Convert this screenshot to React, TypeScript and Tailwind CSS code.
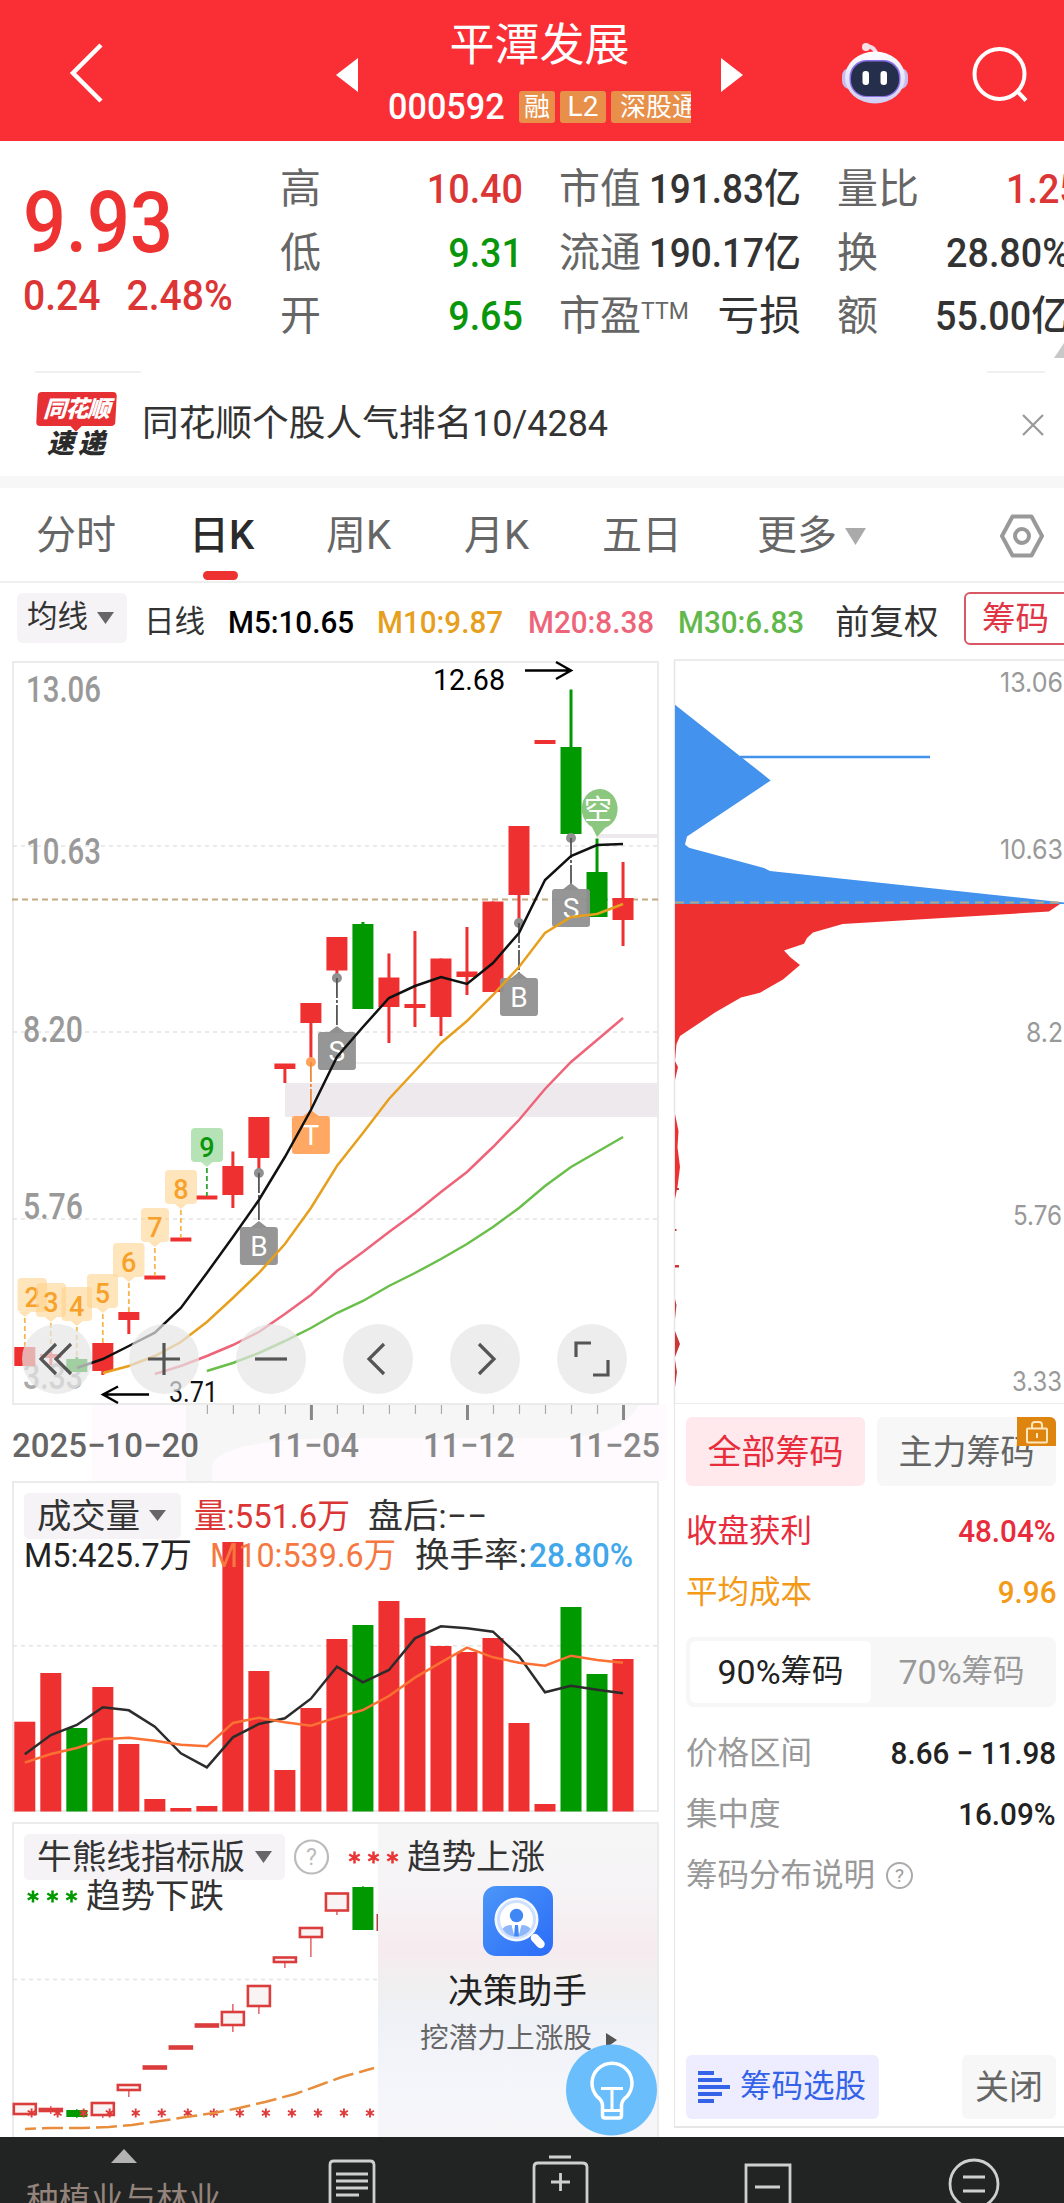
import React from "react";

const CJK = "font-['Roboto','Noto_Sans_CJK_SC',sans-serif]";
const RED = "#ef3030";
const GREEN = "#009900";
const FONT = "Roboto, 'Noto Sans CJK SC', sans-serif";

const cx = (i: number) => 24.8 + i * 26.01;

// [bodyTop, bodyBottom, high, low, up]
type Candle = [number, number, number, number, boolean];

const candles: Candle[] = [
  [1347, 1366, 1347, 1366, true],
  [1354, 1358, 1349, 1365, true],
  [1359, 1372, 1357, 1372, false],
  [1343, 1371, 1343, 1375, true],
  [1312, 1320, 1312, 1334, true],
  [1275.5, 1279.5, 1277, 1278, true],
  [1237.5, 1241.5, 1239, 1240, true],
  [1195.5, 1199.5, 1197, 1198, true],
  [1166, 1195, 1151.5, 1208, true],
  [1117, 1158, 1117, 1173, true],
  [1063.5, 1069, 1064, 1083, true],
  [1003, 1023, 1003, 1062, true],
  [937, 970.5, 937, 977, true],
  [924, 1009, 922, 1009, false],
  [977.5, 1007, 953.5, 1043, true],
  [1004, 1008, 931, 1027, true],
  [958.5, 1017, 958.5, 1036, true],
  [971.5, 977, 927, 995, true],
  [901.5, 992, 901.5, 992, true],
  [826, 895, 826, 923, true],
  [740, 744, 741, 743, true],
  [747, 834, 689.5, 834, false],
  [872, 917, 838.5, 917, false],
  [898, 920, 862, 946, true],
];

const ma5 = [1368, 1359, 1346, 1332.7, 1308, 1273, 1237, 1200, 1157, 1110, 1057, 1027, 998, 986, 977, 984, 963, 933, 880, 856, 845, 844];
const ma10 = [1373, 1366, 1356, 1342, 1322, 1298, 1273, 1244, 1208, 1166, 1133, 1099, 1071, 1043, 1021, 995, 967, 933, 917, 914, 904];
const ma20 = [1374, 1366, 1356, 1345, 1332, 1314, 1295, 1271, 1252, 1232, 1213, 1192, 1172, 1147, 1120, 1089, 1062, 1040, 1018];
const ma30 = [1371, 1363, 1353, 1341, 1328, 1313, 1301, 1286, 1273, 1259, 1244, 1227, 1208, 1186, 1167, 1152, 1137];

const line = (ys: number[], start: number) => ys.map((y, i) => `${cx(i + start)},${y}`).join(" ");

function Label(p: { x: number; y: number; w: number; size: number; color: string; children: string; weight?: number; family?: string }) {
  return (
    <text
      x={p.x}
      y={p.y}
      textLength={p.w}
      lengthAdjust="spacingAndGlyphs"
      fontSize={p.size}
      fill={p.color}
      fontWeight={p.weight ?? 400}
      fontFamily={p.family ?? FONT}
      style={{ whiteSpace: "pre" }}
    >
      {p.children}
    </text>
  );
}

function Signal({ i, dot, top, ch, color = "#8f908f", dash = "#555" }: { i: number; dot: number; top: number; ch: string; color?: string; dash?: string }) {
  const x = cx(i);
  return (
    <g>
      <circle cx={x} cy={dot} r={5} fill={color} />
      <line x1={x} x2={x} y1={dot} y2={top - 4} stroke={dash} strokeWidth={1.8} strokeDasharray="20 2 3 2" />
      <path d={`M${x - 9} ${top + 1}L${x} ${top - 6}L${x + 9} ${top + 1}Z`} fill={color} />
      <rect x={x - 19} y={top} width={38} height={38} rx={3} fill={color} fillOpacity={0.95} />
      <text x={x} y={top + 29} textAnchor="middle" fontSize={28} fill="#fff" fontFamily={FONT}>
        {ch}
      </text>
    </g>
  );
}

function Count({ n, i, left, w, top, end }: { n: number; i: number; left: number; w: number; top: number; end: number }) {
  const g = n === 9;
  const x = cx(i);
  const mid = left + w / 2;
  const fill = g ? "#8fd48f" : "#ffcf85";
  return (
    <g>
      <rect x={left} y={top} width={w} height={34} rx={4} fill={fill} fillOpacity={g ? 0.65 : 0.55} />
      <path d={`M${x - 6} ${top + 34}h12l-6 5z`} fill={fill} fillOpacity={0.6} />
      <line x1={x} x2={x} y1={top + 40} y2={end} stroke={g ? "#31a431" : "#f7b64d"} strokeWidth={1.8} strokeDasharray="5 3" />
      <text x={mid} y={top + 29} textAnchor="middle" fontSize={27} fontWeight={500} fill={g ? "#0a960a" : "#f7a12a"} fontFamily={FONT}>
        {n}
      </text>
    </g>
  );
}

function KChart() {
  return (
    <svg className="block" width={670} height={815} viewBox="0 650 670 815">
      <rect x={92} y={1404} width={574} height={61} fill="#fefafe" />
      <path d="M186 1404H640Q620 1437 560 1438H340Q220 1440 212 1465H186Z" fill="#f7f6f7" />
      <rect x={13} y={662} width={645} height={742} fill="#fff" stroke="#ebebeb" strokeWidth={2} />
      {[846, 1032, 1219].map((y) => (
        <line key={y} x1={13} x2={658} y1={y} y2={y} stroke="#e4e4e4" strokeWidth={1.5} strokeDasharray="4 4" />
      ))}
      <line x1={12} x2={658} y1={899.5} y2={899.5} stroke="#c3aa80" strokeWidth={1.8} strokeDasharray="6 4" />
      <rect x={597} y={834} width={61} height={4} fill="#eee9ec" />
      <line x1={337} x2={658} y1={1063} y2={1063} stroke="#eeeaed" strokeWidth={1.5} />
      <rect x={285} y={1083} width={373} height={34} fill="#eee9ed" />
      <Label x={26} y={702} w={75} size={36} color="#999" weight={500}>13.06</Label>
      <Label x={26} y={864} w={75} size={36} color="#999" weight={500}>10.63</Label>
      <Label x={23} y={1042} w={60} size={36} color="#999" weight={500}>8.20</Label>
      <Label x={23} y={1219} w={60} size={36} color="#999" weight={500}>5.76</Label>
      <Label x={23} y={1389} w={60} size={36} color="#aaa" weight={500}>3.33</Label>

      {candles.map(([t, b, h, l, up], i) => (
        <g key={i} fill={up ? RED : GREEN}>
          <rect x={cx(i) - 1.5} y={h} width={3} height={l - h} />
          <rect x={cx(i) - 10.5} y={t} width={21} height={b - t} />
        </g>
      ))}

      <Signal i={9} dot={1173} top={1227} ch="B" />
      <Signal i={11} dot={1062} top={1116} ch="T" color="#ffa35c" dash="#ee8a3c" />
      <Signal i={12} dot={978} top={1032} ch="S" />
      <Signal i={19} dot={923} top={978} ch="B" />
      <Signal i={21} dot={838} top={889} ch="S" />
      <Count n={2} i={0} left={17.5} w={29.5} top={1278} end={1347} />
      <Count n={3} i={1} left={36} w={30} top={1283} end={1354} />
      <Count n={4} i={2} left={61.5} w={30.5} top={1287} end={1358} />
      <Count n={5} i={3} left={87} w={31} top={1274} end={1343} />
      <Count n={6} i={4} left={113} w={31.5} top={1243} end={1312} />
      <Count n={7} i={5} left={141} w={28} top={1208} end={1276} />
      <Count n={8} i={6} left={165} w={32} top={1170} end={1238} />
      <Count n={9} i={7} left={191} w={32} top={1128} end={1196} />

      <path d="M597 837L592 827A18 20 0 1 1 605 828Z" fill="#82c274" fillOpacity={0.92} />
      <Label x={584} y={820} w={28} size={28} color="#fff">空</Label>

      <g fill="none" strokeWidth={2.5}>
        <polyline points={line(ma30, 7)} stroke="#6abf4b" />
        <polyline points={line(ma20, 5)} stroke="#ee6479" />
        <polyline points={line(ma10, 3)} stroke="#e6a01e" />
        <polyline points={line(ma5, 2)} stroke="#111" />
      </g>

      <Label x={433} y={690} w={72} size={30} color="#000">12.68</Label>
      <path d="M525 670.5H570M556 662L571 670.5L556 679" fill="none" stroke="#000" strokeWidth={2.4} />
      <Label x={169} y={1402} w={49} size={30} color="#111">3.71</Label>
      <path d="M149 1394.5H104M118 1386.5L103 1394.5L118 1403" fill="none" stroke="#000" strokeWidth={2.4} />

      {Array.from({ length: 17 }, (_, k) => {
        const i = k + 7;
        const major = i === 11 || i === 17 || i === 23;
        return <line key={i} x1={cx(i) + 0.5} x2={cx(i) + 0.5} y1={1405} y2={major ? 1420 : 1414} stroke={major ? "#888" : "#aaa"} strokeWidth={major ? 3 : 1.2} />;
      })}
      <Label x={12} y={1457} w={187} size={34} color="#666" weight={500}>2025−10−20</Label>
      <Label x={267} y={1457} w={92} size={34} color="#888" weight={500}>11−04</Label>
      <Label x={423} y={1457} w={92} size={34} color="#888" weight={500}>11−12</Label>
      <Label x={568} y={1457} w={92} size={34} color="#888" weight={500}>11−25</Label>
    </svg>
  );
}

const volumes = [1721.7, 1673, 1728, 1687, 1744, 1799, 1808, 1806, 1542, 1671, 1770, 1708, 1639, 1625, 1601, 1618, 1646, 1652, 1638, 1723, 1804, 1607, 1674, 1659];
const volDown = [2, 13, 21, 22];
const v5 = [853, 795, 765, 712, 721, 770, 850, 892, 802, 762, 745, 686, 590, 637, 600, 505, 469, 475, 485, 558, 667, 647, 659, 670].map((v) => 1470 + v / 3);
const v10 = [878, 852, 834, 808, 803, 812, 824, 829, 759, 743, 757, 767, 742, 720, 678, 623, 577, 533, 562, 578, 587, 557, 570, 578].map((v) => 1470 + v / 3);

function VolumeChart() {
  return (
    <svg className="block" width={670} height={349} viewBox="0 1465 670 349">
      <rect x={92} y={1465} width={574} height={16} fill="#fefafe" />
      <rect x={186} y={1465} width={26} height={16} fill="#f7f6f7" />
      <rect x={13} y={1482} width={645} height={329} fill="#fff" stroke="#ebebeb" strokeWidth={2} />
      <line x1={13} x2={658} y1={1645.7} y2={1645.7} stroke="#e4e4e4" strokeWidth={1.5} strokeDasharray="4 4" />
      {volumes.map((t, i) => (
        <rect key={i} x={cx(i) - 10.5} y={t} width={21} height={1811.5 - t} fill={volDown.includes(i) ? GREEN : RED} />
      ))}
      <g fill="none" strokeWidth={2.5}>
        <polyline points={line(v5, 0)} stroke="#2c2c2c" />
        <polyline points={line(v10, 0)} stroke="#fb7033" />
      </g>
      <rect x={24} y={1493} width={157} height={46} rx={5} fill="#f6f3f7" />
      <Label x={37} y={1528} w={103} size={34} color="#333">成交量</Label>
      <path d="M149 1510h17l-8.500 11z" fill="#666" />
      <Label x={194} y={1528} w={156} size={34} color="#dc3535">量:551.6万</Label>
      <Label x={368} y={1528} w={119} size={34} color="#333">盘后:−−</Label>
      <Label x={24} y={1567} w={168} size={34} color="#222">M5:425.7万</Label>
      <Label x={210} y={1567} w={186} size={34} color="#f67840">M10:539.6万</Label>
      <Label x={415} y={1567} w={112} size={34} color="#333">换手率:</Label>
      <Label x={529} y={1567} w={104} size={34} color="#3fa7ea" weight={500}>28.80%</Label>
    </svg>
  );
}

const hollow: [number, number, number, number][] = [
  [2104, 2114, 2104, 2114],
  [2109, 2111, 2106, 2114],
  [2110, 2117, 2109, 2118],
  [2103, 2115, 2103, 2118],
  [2085, 2090, 2085, 2097],
  [2066.5, 2068.5, 2067, 2068],
  [2046.5, 2048.5, 2047, 2048],
  [2024.5, 2026.5, 2025, 2026],
  [2012, 2025, 2004, 2032],
  [1986, 2006, 1986, 2014],
  [1957.5, 1962, 1957, 1968],
  [1928, 1937, 1928, 1957],
  [1893.5, 1910.5, 1893, 1915],
  [1887, 1930, 1886, 1930],
];

function Star({ x, y, r, color }: { x: number; y: number; r: number; color: string }) {
  const dx = r * 0.87;
  const dy = r * 0.5;
  return (
    <path d={`M${x} ${y - r}V${y + r}M${x - dx} ${y - dy}L${x + dx} ${y + dy}M${x + dx} ${y - dy}L${x - dx} ${y + dy}`} stroke={color} strokeWidth={r * 0.42} />
  );
}

function Help({ x, y, r }: { x: number; y: number; r: number }) {
  return (
    <g>
      <circle cx={x} cy={y} r={r} fill="none" stroke="#bbb" strokeWidth={2.2} />
      <text x={x} y={y + r * 0.5} textAnchor="middle" fontSize={r * 1.4} fill="#bbb" fontFamily={FONT}>?</text>
    </g>
  );
}

function TrendChart() {
  return (
    <svg className="block" width={670} height={323} viewBox="0 1814 670 323">
      <defs>
        <linearGradient id="promo" x1="0" y1="0" x2="0" y2="1">
          <stop offset="0" stopColor="#f6f6f6" />
          <stop offset="0.2" stopColor="#f6f4f6" />
          <stop offset="0.4" stopColor="#f6ebef" />
          <stop offset="0.5" stopColor="#f1efef" />
          <stop offset="0.62" stopColor="#eef1f6" />
          <stop offset="0.8" stopColor="#f4f5fb" />
          <stop offset="1" stopColor="#f6f6f8" />
        </linearGradient>
        <linearGradient id="app" x1="0" y1="0" x2="1" y2="1">
          <stop offset="0" stopColor="#4b96f8" />
          <stop offset="1" stopColor="#2b6cf8" />
        </linearGradient>
      </defs>
      <path d="M13 2137V1823H658V2137" fill="#fff" stroke="#ebebeb" strokeWidth={2} />
      <rect x={378} y={1824} width={279} height={313} fill="url(#promo)" />
      <line x1={13} x2={377} y1={1979.5} y2={1979.5} stroke="#e4e4e4" strokeWidth={1.5} strokeDasharray="4 4" />
      {hollow.map(([t, b, h, l], i) => {
        const down = i === 2 || i === 13;
        const c = down ? GREEN : "#db3c3c";
        return (
          <g key={i}>
            <line x1={cx(i)} x2={cx(i)} y1={h} y2={t} stroke={c} strokeWidth={1.2} />
            <line x1={cx(i)} x2={cx(i)} y1={b} y2={l} stroke={c} strokeWidth={1.2} />
            {down ? (
              <rect x={cx(i) - 10.5} y={t} width={21} height={b - t} fill={c} />
            ) : (
              <rect x={cx(i) - 11} y={t} width={22} height={b - t} fill="#faf3f3" stroke={c} strokeWidth={2.6} />
            )}
          </g>
        );
      })}
      <rect x={376.5} y={1914} width={1.5} height={17} fill="#b04040" />
      {Array.from({ length: 14 }, (_, i) => (
        <Star key={i} x={31.6 + i * 26.03} y={2113} r={4.5} color="#e03a3a" />
      ))}
      <polyline
        points="25,2129 51,2128 83,2128 109,2127 132,2125 160,2121 186,2117 214,2113 239,2108 265,2102 295,2094 320,2085 342,2077 374,2068"
        fill="none"
        stroke="#e88d3c"
        strokeWidth={2.5}
        strokeDasharray="21 6"
        strokeDashoffset={10}
      />
      <rect x={24} y={1834} width={261} height={46} rx={5} fill="#f6f3f7" />
      <Label x={37} y={1869} w={208} size={34} color="#333">牛熊线指标版</Label>
      <path d="M255 1851h17l-8.500 12z" fill="#666" />
      <Help x={311.5} y={1857} r={16.5} />
      {[354.5, 373.5, 392.5].map((x) => <Star key={x} x={x} y={1857.5} r={6} color="#e93535" />)}
      <Label x={407} y={1869} w={138} size={34} color="#333">趋势上涨</Label>
      {[33, 52.5, 71.5].map((x) => <Star key={x} x={x} y={1896.5} r={6} color={GREEN} />)}
      <Label x={86} y={1908} w={138} size={34} color="#333">趋势下跌</Label>

      <rect x={483} y={1886} width={70} height={70} rx={13} fill="url(#app)" />
      <circle cx={516.5} cy={1919.5} r={22} fill="#f5f9ff" />
      <circle cx={516.5} cy={1919.5} r={18} fill="#fff" stroke="#cfe0ff" strokeWidth={3} />
      <circle cx={516.5} cy={1915.5} r={6.7} fill="#3f87f5" />
      <path d="M502.500 1929Q505 1925 511.500 1925L514.500 1936.500Q507 1936 502.500 1929ZM530.500 1929Q528 1925 521.500 1925L518.500 1936.500Q526 1936 530.500 1929Z" fill="#8db7fa" />
      <path d="M515 1925h3l1 11.500h-5z" fill="#3f87f5" />
      <path d="M535 1938l5.500 6" stroke="#fff" strokeWidth={8.5} strokeLinecap="round" />
      <Label x={448} y={2003} w={139} size={34.5} color="#222">决策助手</Label>
      <Label x={420} y={2048} w={172} size={28} color="#666">挖潜力上涨股</Label>
      <path d="M606 2033l11 7l-11 8z" fill="#555" />
      <circle cx={611.5} cy={2090} r={45.5} fill="#6bbefc" />
      <g fill="none" stroke="#fff" strokeWidth={3.5}>
        <path d="M602.500 2105Q602 2100 597 2096.500A20 20 0 1 1 627 2096.500Q622 2100 621.500 2105V2115.500Q621.500 2118 619 2118H605Q602.500 2118 602.500 2115.500Z" />
        <path d="M602 2110.500H622M601 2088.500H623M612 2088.500V2110" strokeWidth={3} />
      </g>
    </svg>
  );
}

function ChipChart() {
  const axis: [string, number, number, number][] = [
    ["13.06", 1000, 692, 63],
    ["10.63", 1000, 859, 63],
    ["8.2", 1026, 1042, 37],
    ["5.76", 1013, 1225, 49],
    ["3.33", 1012, 1391, 50],
  ];
  return (
    <svg className="block" width={394} height={754} viewBox="670 650 394 754">
      <path d="M1064 660H674.500V1404H1064" fill="none" stroke="#e6e6e6" strokeWidth={1.5} />
      <path d="M675 704.800L770.700 780.400L687 836.600L685 844.400L689 847.800L764 868L770 871L1064 902.500V904H675Z" fill="#4292ee" />
      <path d="M740 757H930" stroke="#4292ee" strokeWidth={2.5} />
      <path
        d="M675 904H1060L1049 911.500L842.700 924L813 932.600L807 938L804 943.700L784 950.500L790 957L800 965L783 979.600L760 992.700L741 997.500L715 1012.600L680 1036L676.500 1044L675 1061L678 1067L675 1080V1114L678.500 1131L677.500 1147L680 1167L677.500 1187L675 1199Z"
        fill={RED}
      />
      <path d="M675 1265h4v2.500h-4zM675 1188h4v2h-4zM675 1229h1.500v2h-1.500zM675 1299l1.500 6l-1.500 14zM675 1331l5 13l-5 13zM675 1360l2 12l-2 15z" fill="#cf3535" />
      <path d="M675 902.500H1062" stroke="#b8a882" strokeWidth={2} strokeDasharray="9 6" />
      {axis.map(([t, x, y, w]) => (
        <Label key={t} x={x} y={y} w={w} size={27} color="#999" family="Inter, sans-serif">{t}</Label>
      ))}
    </svg>
  );
}

function QuoteRow({ label, value, tone, l2, v2, l3, v3, sup }: { label: string; value: string; tone: string; l2: string; v2: React.ReactNode; l3: string; v3: React.ReactNode; sup?: string }) {
  return (
    <div className="flex h-[63.5px] items-center whitespace-nowrap text-[41px] leading-none text-[#666]">
      <span className="w-[80px] shrink-0">{label}</span>
      <span className={`w-[163px] shrink-0 origin-right scale-x-[.92] text-right font-medium ${tone}`}>{value}</span>
      <span className="ml-[36px] flex w-[136px] shrink-0 items-start">
        {l2}
        {sup && <sup className="top-0 mt-1 text-[23px] leading-none">{sup}</sup>}
      </span>
      <span className="w-[106px] shrink-0">
        <span className="float-right origin-right scale-x-[.9] font-medium text-[#333]">{v2}</span>
      </span>
      <span className="ml-[36px] w-[84px] shrink-0">{l3}</span>
      <span className="ml-auto shrink-0 font-medium text-[#333]">{v3}</span>
    </div>
  );
}

function ToolButton({ children }: { children: React.ReactNode }) {
  return (
    <button className="flex size-[70px] items-center justify-center rounded-full bg-[#e5e5e5]/70">
      <svg width={40} height={40} viewBox="0 0 40 40" fill="none" stroke="#555" strokeWidth={3.2}>{children}</svg>
    </button>
  );
}

export default function App() {
  return (
    <div className={`flex h-[2203px] w-[1064px] flex-col overflow-hidden bg-white ${CJK}`}>
      <header className="flex h-[141px] shrink-0 items-center bg-[#fa2e35] text-white">
        <svg className="ml-[66px]" width={40} height={64} viewBox="0 0 40 64" fill="none" stroke="#fff" strokeWidth={4.5}>
          <path d="M35 6L7 34L35 62" />
        </svg>
        <svg className="ml-[230px] mt-2" width={22} height={34} viewBox="0 0 22 34"><path d="M22 0V34L0 17Z" fill="#fff" /></svg>
        <div className="ml-[30px] mt-[3px] flex w-[303px] flex-col items-center">
          <h1 className="text-[45px] leading-[50px]">平潭发展</h1>
          <div className="mt-[20px] flex h-8 w-full items-center gap-[5px] overflow-hidden whitespace-nowrap text-[26px]">
            <span className="w-[126px] shrink-0 origin-left scale-x-[.95] text-[36px] font-medium leading-8">000592</span>
            <span className="flex h-8 w-9 shrink-0 items-center justify-center rounded-[3px] bg-[#e8904a]">融</span>
            <span className="flex h-8 w-[46px] shrink-0 items-center justify-center rounded-[3px] bg-[#e8904a] text-[28px]">L2</span>
            <span className="flex h-8 w-[90px] shrink-0 items-center rounded-[3px] bg-[#e8904a] pl-[9px]">深股通</span>
          </div>
        </div>
        <svg className="ml-[30px] mt-2" width={22} height={34} viewBox="0 0 22 34"><path d="M0 0V34L22 17Z" fill="#fff" /></svg>
        <svg className="ml-[97px] mt-1" width={70} height={64} viewBox="0 0 70 64">
          <defs>
            <linearGradient id="bot" x1="0" y1="0" x2="0" y2="1">
              <stop offset="0" stopColor="#fff" />
              <stop offset="1" stopColor="#cfcdf2" />
            </linearGradient>
          </defs>
          <path d="M36 14Q36 6 27 5" fill="none" stroke="#f4dbe8" strokeWidth={4} strokeLinecap="round" />
          <circle cx={26} cy={6} r={4} fill="#f7dfe8" />
          <rect x={2} y={27} width={66} height={21} rx={8} fill="#c9bcec" />
          <ellipse cx={35} cy={36.5} rx={30} ry={26} fill="url(#bot)" />
          <rect x={9.5} y={19} width={51} height={37} rx={17} fill="#8a70e8" />
          <rect x={11} y={20.5} width={48} height={34.5} rx={16} fill="#252f4c" />
          <rect x={22.5} y={30} width={6.5} height={14} rx={3} fill="#fff" />
          <rect x={40.5} y={30} width={6.5} height={14} rx={3} fill="#fff" />
        </svg>
        <svg className="ml-[61px] mt-2" width={60} height={60} viewBox="0 0 60 60" fill="none" stroke="#fff" strokeWidth={4}>
          <circle cx={28.5} cy={29} r={25} />
          <path d="M46 46L55 55.500" />
        </svg>
      </header>

      <section className="relative flex h-[230px] shrink-0">
        <div className="w-[280px] shrink-0 whitespace-nowrap pl-[23px] pt-[36px] font-medium text-[#ee3232]">
          <div className="origin-left scale-x-[.88] text-[86px] leading-[92px]">9.93</div>
          <div className="flex w-[242px] origin-left scale-x-[.93] gap-[28px] text-[42px] leading-[54px] text-[#dc3535]">
            <span>0.24</span>
            <span>2.48%</span>
          </div>
        </div>
        <div className="w-[784px] pt-[17px]">
          <QuoteRow label="高" value="10.40" tone="text-[#dc3535]" l2="市值" v2="191.83亿" l3="量比" v3={<span className="-mr-4 inline-block w-[74px] origin-left scale-x-[.92] text-[#dc3535]">1.25</span>} />
          <QuoteRow label="低" value="9.31" tone="text-[#0a960a]" l2="流通" v2="190.17亿" l3="换" v3={<span className="inline-block w-[118px] origin-left scale-x-[.92]">28.80%</span>} />
          <QuoteRow label="开" value="9.65" tone="text-[#0a960a]" l2="市盈" sup="TTM" v2={<span className="inline-block origin-right scale-x-[1.13] font-normal">亏损</span>} l3="额" v3={<span className="inline-block w-[129px] origin-left scale-x-[.92]">55.00亿</span>} />
        </div>
        <svg className="absolute right-0 top-[202px]" width={10} height={15} viewBox="0 0 10 15"><path d="M10 0V15H0Z" fill="#c8c8c8" /></svg>
      </section>

      <section className="flex h-[105px] shrink-0 flex-col">
        <div className="flex justify-between pl-[35px] pr-[19px]">
          <div className="h-[2px] w-[106px] bg-[#f0f0f0]" />
          <div className="h-[2px] w-[58px] bg-[#f0f0f0]" />
        </div>
        <div className="flex flex-1 items-center pl-[34px] pr-[16px]">
          <div className="flex w-[84px] flex-col items-center font-black italic leading-none">
            <div className="relative flex h-[34px] w-[79px] -skew-x-3 items-center justify-center rounded-[4px] bg-[#e73034] text-[23px] tracking-[-1px] text-white">
              同花顺
              <div className="absolute -bottom-1 left-9 size-2 rotate-45 bg-[#e73034]" />
            </div>
            <div className="mt-[4px] flex gap-1 text-[27px] leading-[28px] text-[#2b2b2b]"><span>速</span><span>递</span></div>
          </div>
          <div className="ml-[24px] whitespace-nowrap text-[36.7px] leading-none text-[#333]">同花顺个股人气排名<span className="inline-block origin-left scale-x-[.98]">10/4284</span></div>
          <svg className="ml-auto" width={28} height={28} viewBox="0 0 28 28" stroke="#999" strokeWidth={2.2}><path d="M3 4L23 24M23 4L3 24" /></svg>
        </div>
      </section>
      <div className="h-3 shrink-0 bg-[#f7f7f7]" />

      <nav className="flex h-[95px] shrink-0 items-center border-b-2 border-[#efefef] pl-[36px] pr-[18px] pt-[3px] text-[40px] leading-none text-[#666]">
        <span className="w-[153px]">分时</span>
        <span className="relative w-[137px] font-medium text-[#2b2b2b]">
          日K
          <span className="absolute left-[14px] top-[54.5px] h-[9px] w-[35px] rounded-full bg-[#ee3232]" />
        </span>
        <span className="w-[138px]">周K</span>
        <span className="w-[138px]">月K</span>
        <span className="w-[155px]">五日</span>
        <span className="flex items-center gap-2">
          更多
          <svg width={21} height={17} viewBox="0 0 21 17"><path d="M0 0H21L10.500 17Z" fill="#aaa" /></svg>
        </span>
        <svg className="ml-auto" width={48} height={46} viewBox="0 0 48 46" fill="none" stroke="#999" strokeWidth={4}>
          <path d="M14.500 3.500H33.500L44 23L33.500 42.500H14.500L4 23Z" strokeLinejoin="round" />
          <circle cx={24} cy={23} r={7} />
        </svg>
      </nav>

      <div className="flex h-[67px] shrink-0 items-center whitespace-nowrap pl-[17px] pt-[12px] text-[30.5px] leading-none text-[#333]">
        <span className="mb-[10px] flex h-[50px] w-[110px] shrink-0 items-center gap-[9px] rounded-[6px] bg-[#f6f3f7] pl-[10px]">
          均线
          <svg width={17} height={12} viewBox="0 0 17 12"><path d="M0 0H17L8.500 12Z" fill="#666" /></svg>
        </span>
        <span className="ml-[17px] w-[84px] shrink-0">日线</span>
        <span className="w-[149px] shrink-0 origin-left scale-x-[.955] text-[31px] font-medium text-black">M5:10.65</span>
        <span className="w-[151px] shrink-0 origin-left scale-x-[.955] text-[31px] font-medium text-[#e6a01e]">M10:9.87</span>
        <span className="w-[150px] shrink-0 origin-left scale-x-[.955] text-[31px] font-medium text-[#ee6479]">M20:8.38</span>
        <span className="w-[157px] shrink-0 origin-left scale-x-[.955] text-[31px] font-medium text-[#62b84a]">M30:6.83</span>
        <span className="w-[129px] shrink-0 text-[34.5px]">前复权</span>
        <span className="mb-2 flex h-[53px] w-[120px] shrink-0 items-center rounded-[6px] border-2 border-[#d95865] pl-[16px] text-[33.5px] text-[#e03545]">筹码</span>
      </div>

      <main className="flex h-[1487px] shrink-0">
        <div className="relative w-[670px] shrink-0">
          <KChart />
          <div className="absolute left-[22px] top-[674px] flex gap-[37px]">
            <ToolButton><path d="M19 5L4 20L19 35M34 5L19 20L34 35" /></ToolButton>
            <ToolButton><path d="M20 4V36M4 20H36" /></ToolButton>
            <ToolButton><path d="M4 20H36" /></ToolButton>
            <ToolButton><path d="M26 5L11 20L26 35" /></ToolButton>
            <ToolButton><path d="M14 5L29 20L14 35" /></ToolButton>
            <ToolButton><path d="M4 18V4H19M21 36H36V21" /></ToolButton>
          </div>
          <VolumeChart />
          <TrendChart />
        </div>

        <aside className="w-[394px]">
          <ChipChart />
          <div className="ml-1 flex h-[724px] flex-col border-b-2 border-l-[1.5px] border-[#e6e6e6] pb-[7px] pl-[11px] pr-[8px] pt-[13px] text-[31.5px] leading-none text-[#999]">
            <div className="flex gap-[12px] text-[34px]">
              <div className="flex h-[69px] flex-1 items-center justify-center rounded-[6px] bg-[#ffe9ed] text-[#e82c3c]">全部筹码</div>
              <div className="relative flex h-[69px] flex-1 items-center justify-center rounded-[6px] bg-[#f7f7f7] text-[#666]">
                主力筹码
                <span className="absolute right-0 top-0 flex h-[29px] w-[39px] items-center justify-center rounded-tr-[6px] bg-[#de850f]">
                  <svg width={24} height={24} viewBox="0 0 24 24" fill="none" stroke="#ffe6bd" strokeWidth={2}>
                    <rect x={2} y={8.5} width={20} height={14} rx={1} />
                    <path d="M7 8V5Q7 2 10 2H14Q17 2 17 5V8M12 13v5" />
                  </svg>
                </span>
              </div>
            </div>
            <div className="mt-[15px] flex h-[61px] items-center justify-between text-[#e82c3c]">收盘获利<b className="origin-right scale-x-[.94] font-medium">48.04%</b></div>
            <div className="flex h-[61px] items-center justify-between text-[#f39a18]">平均成本<b className="origin-right scale-x-[.94] font-medium">9.96</b></div>
            <div className="mt-[14px] flex h-[70px] rounded-[8px] bg-[#f7f7f7] p-1">
              <div className="flex w-[181px] items-center justify-center rounded-[6px] bg-white text-[#222]"><span className="text-[34px]">90%</span>筹码</div>
              <div className="flex flex-1 items-center justify-center"><span className="text-[34px]">70%</span>筹码</div>
            </div>
            <div className="mt-[16px] flex h-[61px] items-center justify-between">价格区间<b className="origin-right scale-x-[.94] font-medium text-[#222]">8.66 − 11.98</b></div>
            <div className="flex h-[61px] items-center justify-between">集中度<b className="origin-right scale-x-[.94] font-medium text-[#222]">16.09%</b></div>
            <div className="flex h-[61px] items-center gap-[11px]">
              筹码分布说明
              <span className="flex size-[27px] items-center justify-center rounded-full border-2 border-[#aaa] text-[19px]">?</span>
            </div>
            <div className="mt-auto flex h-[64px] justify-between">
              <div className="flex w-[193px] items-center gap-[10px] rounded-[6px] bg-[#ededff] pl-[12px] text-[#3563e8]">
                <svg width={32} height={32} viewBox="0 0 32 32" fill="#3563e8">
                  <path d="M0 0H16V4H0ZM0 7H24V11H0ZM0 14H32V18H0ZM0 21H24V25H0ZM0 28H16V32H0Z" />
                </svg>
                筹码选股
              </div>
              <div className="flex w-[94px] items-center justify-center rounded-[6px] bg-[#f7f7f7] text-[34px] text-[#666]">关闭</div>
            </div>
          </div>
        </aside>
      </main>

      <footer className="flex h-[66px] shrink-0 bg-[#212422]">
        <div className="flex w-[247px] flex-col items-center overflow-hidden whitespace-nowrap pt-3">
          <svg width={26} height={14} viewBox="0 0 26 14" className="shrink-0"><path d="M13 0L26 14H0Z" fill="#b4b3b4" /></svg>
          <span className="mt-[15px] text-[32.5px] leading-[44px] text-[#94837b]">种植业与林业</span>
        </div>
        <svg className="ml-[80px] mt-[20px]" width={52} height={46} viewBox="0 0 52 46" fill="none" stroke="#d0cfd0" strokeWidth={2.8}>
          <path d="M3 60V8Q3 4 7 4H43Q47 4 47 8V60M9 17H41M9 24H41M9 31H41M9 38H32" />
        </svg>
        <svg className="ml-[151px] mt-[14px]" width={60} height={52} viewBox="0 0 60 52" fill="none" stroke="#d0cfd0" strokeWidth={2.8}>
          <path d="M4 60V16Q4 12 8 12H52Q57 12 57 16V60M19 6H41M21 31H40M30.500 22V40" />
        </svg>
        <svg className="ml-[152px] mt-[24px]" width={50} height={42} viewBox="0 0 50 42" fill="none" stroke="#d0cfd0" strokeWidth={2.8}>
          <path d="M4 60V4H48V60M13 26H38" />
        </svg>
        <svg className="ml-[155px] mt-[20px]" width={56} height={46} viewBox="0 0 56 46" fill="none" stroke="#d0cfd0" strokeWidth={2.8}>
          <circle cx={27} cy={27} r={24} />
          <path d="M16 20H38M16 34H38" />
        </svg>
      </footer>
    </div>
  );
}
